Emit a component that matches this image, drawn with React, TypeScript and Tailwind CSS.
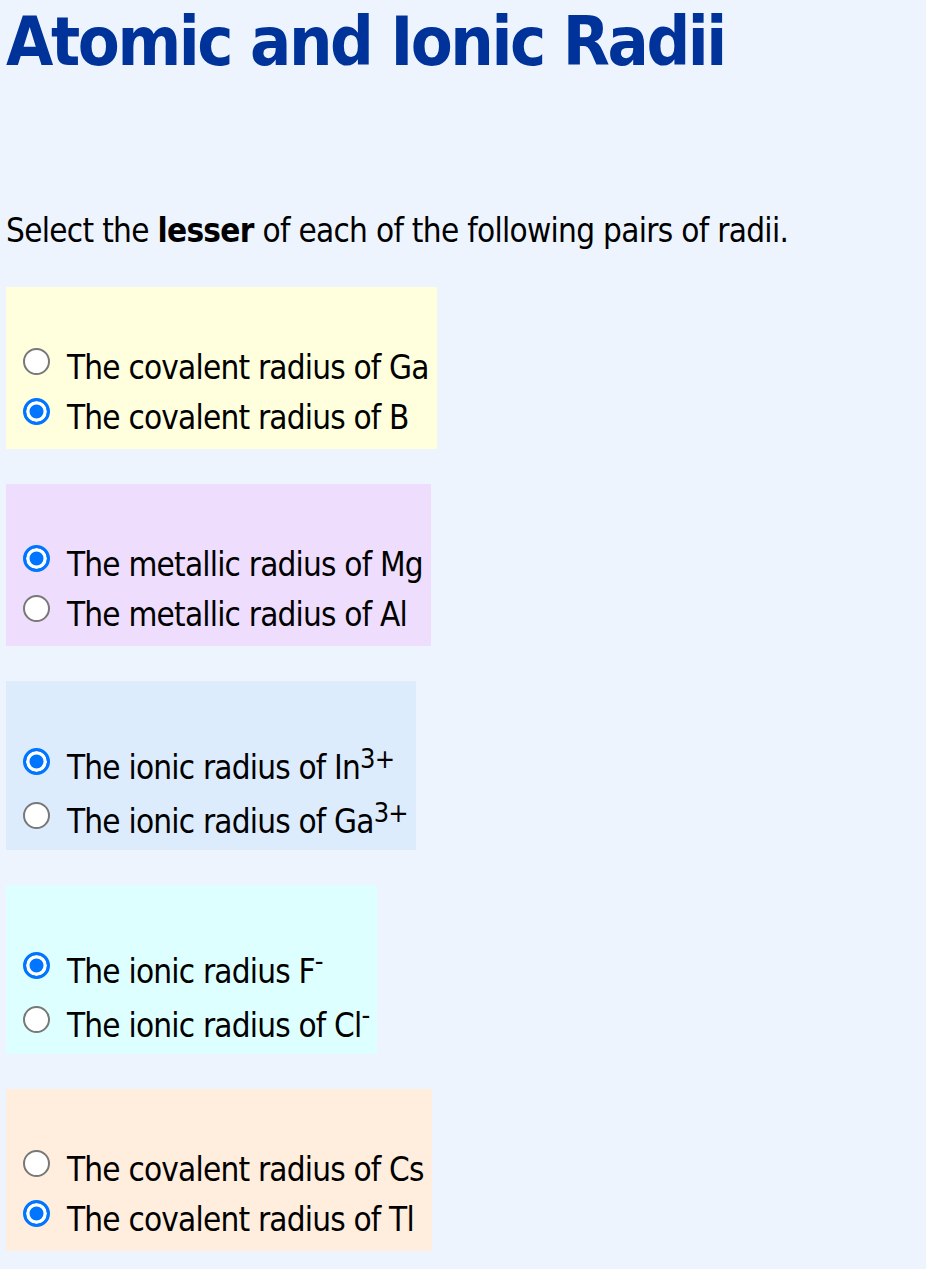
import type { ReactNode } from 'react'

type Option = { label: ReactNode; checked?: boolean }

type Pair = { bg: string; sup?: boolean; options: Option[] }

const pairs: Pair[] = [
  {
    bg: 'bg-[#ffffdd]',
    options: [{ label: 'The covalent radius of Ga' }, { label: 'The covalent radius of B', checked: true }],
  },
  {
    bg: 'bg-[#eeddfd]',
    options: [{ label: 'The metallic radius of Mg', checked: true }, { label: 'The metallic radius of Al' }],
  },
  {
    bg: 'bg-[#ddecfd]',
    sup: true,
    options: [
      { label: <>The ionic radius of In<sup className="text-[27px] top-[-11px]">3+</sup></>, checked: true },
      { label: <>The ionic radius of Ga<sup className="text-[27px] top-[-11px]">3+</sup></> },
    ],
  },
  {
    bg: 'bg-[#ddffff]',
    sup: true,
    options: [
      { label: <>The ionic radius F<sup className="text-[27px] top-[-13px]">-</sup></>, checked: true },
      { label: <>The ionic radius of Cl<sup className="text-[27px] top-[-13px]">-</sup></> },
    ],
  },
  {
    bg: 'bg-[#ffeddd]',
    options: [{ label: 'The covalent radius of Cs' }, { label: 'The covalent radius of Tl', checked: true }],
  },
]

export default function App() {
  return (
    <div className="min-h-screen bg-[#edf4fe] pl-[6px] pt-[2px] pb-[18px] font-['DejaVu_Sans_Condensed','DejaVu_Sans',sans-serif] text-black">
      <h1 className="text-[68px] leading-[80px] font-bold tracking-[-2.4px] text-[#003399] whitespace-nowrap">
        Atomic and Ionic Radii
      </h1>

      <p className="mt-[124px] text-[33px] leading-[50px] tracking-[-0.7px] whitespace-nowrap">
        Select the <b className="font-bold">lesser</b> of each of the following pairs of radii.
      </p>

      <div className="mt-[31px] flex flex-col items-start gap-[35px]">
        {pairs.map((pair, i) => (
          <div
            key={i}
            className={`w-fit pl-[17px] pr-[8px] ${pair.bg} ${pair.sup ? 'pt-[58px] pb-[3px]' : 'pt-[56px] pb-[6px]'}`}
          >
            {pair.options.map((opt, j) => (
              <label key={j} className={`flex items-start ${pair.sup ? 'pt-[4px]' : ''}`}>
                <input
                  type="radio"
                  name={`q${i}`}
                  defaultChecked={opt.checked}
                  className="mt-[5px] h-[27px] w-[27px] shrink-0 appearance-none rounded-full border-[2.5px] border-[#787878] bg-white checked:border-[3px] checked:border-[#0075ff] checked:bg-[#0075ff] checked:shadow-[inset_0_0_0_3.5px_#ffffff]"
                />
                <span className="ml-[17px] text-[33px] leading-[50px] tracking-[-0.8px] whitespace-nowrap">
                  {opt.label}
                </span>
              </label>
            ))}
          </div>
        ))}
      </div>
    </div>
  )
}
